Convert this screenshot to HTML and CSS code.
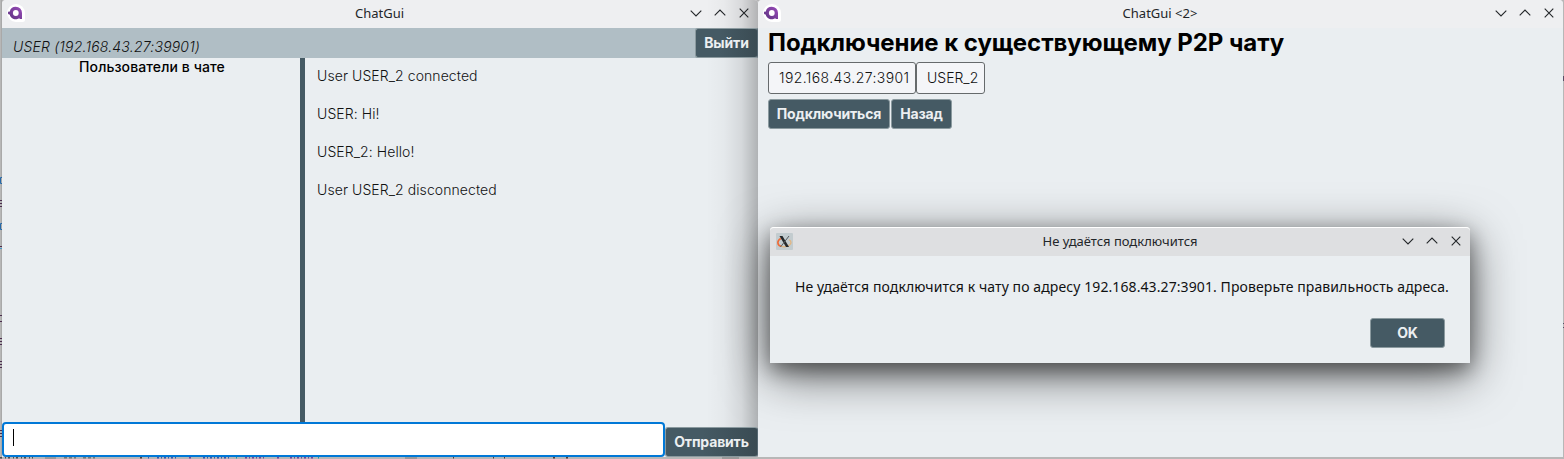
FILE: index.html
```html
<!DOCTYPE html>
<html lang="ru">
<head>
<meta charset="utf-8">
<title>ChatGui</title>
<link rel="stylesheet" href="styles.css">
</head>
<body>
<svg class="defs" width="0" height="0" aria-hidden="true">
  <defs>
    <linearGradient id="purple" x1="0" y1="1" x2="1" y2="0"><stop offset="0" stop-color="#5b327f"/><stop offset="1" stop-color="#9a4cba"/></linearGradient>
    <symbol id="logo" viewBox="0 0 18 18">
      <path d="M9 0a9 9 0 1 0 0 18h6.500a2.500 2.500 0 0 0 2.500-2.500V9a9 9 0 0 0-9-9z" fill="#fff"/>
      <path d="M8.800 2.700a6.200 6.200 0 0 0-6.100 5 1.400 1.400 0 1 0 0 2.700 6.200 6.200 0 0 0 9.800 3.700v.9H15V9a6.200 6.200 0 0 0-6.200-6.300z" fill="url(#purple)"/>
      <circle cx="8.800" cy="9" r="2.900" fill="#fff"/>
    </symbol>
    <symbol id="down" viewBox="0 0 12 12"><path d="M.7 3.600L6 8.900l5.300-5.300"/></symbol>
    <symbol id="up" viewBox="0 0 12 12"><path d="M.7 8.300L6 3l5.300 5.300"/></symbol>
    <symbol id="close" viewBox="0 0 12 12"><path d="M1.700 1.700l8.600 8.600M10.300 1.700L1.700 10.300"/></symbol>
  </defs>
</svg>
<main class="desktop">
  <svg class="backdrop" width="1564" height="459" viewBox="0 0 1564 459" aria-hidden="true">
    <path d="M1.500 0V459" stroke="#a9a9a9"/>
    <g fill="none" stroke-width="1">
      <path d="M2 177.500H.5v6H2M2 223.500H.5v6H2" stroke="#2468a8"/>
      <path d="M0 200.500h2M0 203.500h2M0 206.500h2M0 246.500h2M0 315.500h2M0 321.500h2M0 338.500h2M0 341.500h2M0 344.500h2M0 361.500h2M0 364.500h2M0 367.500h2M0 430.500h2M0 433.500h2M0 436.500h2" stroke="#4a2c4e"/>
      <path d="M0 248.500h2" stroke="#4898c8"/>
    </g>
    <g fill="none" stroke-width="1.500">
      <path d="M0 457.800h33" stroke="#514a4c" stroke-dasharray="2 3 1 2"/>
      <path d="M45 458h11M405 458h12M722 458h17" stroke="#999" stroke-width="2"/>
      <path d="M64 457.800h12m7 0h12" stroke="#777" stroke-dasharray="3 2"/>
      <path d="M140 457.800h2M453 457.800h1M493 457.800h1M504 457.800h1M553 457.800h2M566 457.800h2" stroke="#553b35"/>
      <path d="M148 457.800h1m8 0h19m27 0h28" stroke="#3a55ad" stroke-dasharray="2 2 1 2"/>
      <path d="M189 457.800h2m54 0h19m13 0h2m11 0h23" stroke="#74439a" stroke-dasharray="2 2 1 2"/>
      <path d="M236 457.800h1m81 0h1" stroke="#179aa8"/>
      <path d="M1563.500 76v5m0 242v1m0 3v1" stroke="#594d65" stroke-width="1"/>
    </g>
  </svg>
  <section class="window chat">
    <header class="titlebar">
      <svg class="logo"><use href="#logo"/></svg>
      <span class="caption">ChatGui</span>
      <div class="controls"><svg><use href="#down"/></svg><svg><use href="#up"/></svg><svg><use href="#close"/></svg></div>
    </header>
    <div class="userbar"><span class="user">USER (192.168.43.27:39901)</span><button class="btn btn--exit">Выйти</button></div>
    <div class="chat-body">
      <aside class="members">Пользователи в чате</aside>
      <div class="messages"><p>User USER_2 connected</p><p>USER: Hi!</p><p>USER_2: Hello!</p><p>User USER_2 disconnected</p></div>
    </div>
    <footer class="composer"><div class="message-input"><i class="caret"></i></div><button class="btn btn--send">Отправить</button></footer>
  </section>
  <section class="window connect">
    <header class="titlebar">
      <svg class="logo"><use href="#logo"/></svg>
      <span class="caption">ChatGui &lt;2&gt;</span>
      <div class="controls"><svg><use href="#down"/></svg><svg><use href="#up"/></svg><svg><use href="#close"/></svg></div>
    </header>
    <div class="form">
      <h1>Подключение к существующему P2P чату</h1>
      <div class="fields"><div class="field field--address">192.168.43.27:3901</div><div class="field field--name">USER_2</div></div>
      <div class="actions"><button class="btn btn--connect">Подключиться</button><button class="btn btn--back">Назад</button></div>
    </div>
  </section>
  <section class="dialog">
    <header class="titlebar titlebar--dialog">
      <svg class="xlogo" viewBox="0 0 17 17"><rect width="17" height="17" rx="1" fill="#c3cccf"/><path d="M4.800 5.500C.8 7.500.9 12.400 5 13.300" fill="none" stroke="#ef6a36" stroke-width="1.600"/><path d="M5 13.300c4 1.400 10-.5 10-4 0-1-.7-2-2-2.600" fill="none" stroke="#e3b57f" stroke-width="1.200"/><path d="M3.500 3h3l6.500 11h-3z" fill="#26292b"/><path d="M13 3L4.500 14" stroke="#555b5e" stroke-width="1"/></svg>
      <span class="caption">Не удаётся подключится</span>
      <div class="controls"><svg><use href="#down"/></svg><svg><use href="#up"/></svg><svg><use href="#close"/></svg></div>
    </header>
    <p class="dialog-text">Не удаётся подключится к чату по адресу 192.168.43.27:3901. Проверьте правильность адреса.</p>
    <div class="dialog-actions"><button class="btn btn--ok">OK</button></div>
  </section>
</main>
</body>
</html>
```
FILE: styles.css
```css
* { box-sizing: border-box; }
body { margin: 0; overflow: hidden; font-family: Inter, sans-serif; font-size: 14px; color: #111; }
p, h1 { margin: 0; }
.defs { position: absolute; }
.desktop { position: relative; display: flex; width: 1564px; height: 459px; padding-left: 2px; background: #b7b7b7; overflow: hidden; }
.backdrop { position: absolute; left: 0; top: 0; }

.window { position: relative; display: flex; flex-direction: column; height: 457px; background: #eaeef1; border-radius: 4px 4px 0 0; overflow: hidden; }
.chat { width: 756px; }
.chat::after { content: ""; position: absolute; inset: 0 0 0 auto; width: 52px; pointer-events: none; background: linear-gradient(to right, transparent, rgba(0,0,0,.025) 35%, rgba(0,0,0,.09) 68%, rgba(0,0,0,.25)); }
.connect { width: 805px; }

.titlebar { display: grid; grid-template-columns: 72px 1fr 72px; align-items: center; flex: none; height: 28px; padding: 0 6px 2px 5px; background: #eeeff1; }
.logo { width: 18px; height: 18px; }
.caption { text-align: center; font: 13px/18px "Noto Sans", sans-serif; color: #232629; }
.controls { display: flex; justify-content: flex-end; gap: 12px; padding-right: 2px; }
.controls svg { width: 12px; height: 12px; fill: none; stroke: #232629; stroke-width: 1.1; }

.btn { height: 30px; padding: 0; border: 1px solid #8b9a9f; border-radius: 3px; background: #455a64; color: #eceff1; font: 700 14px/26px Inter, sans-serif; letter-spacing: -.15px; }
.btn--exit { width: 63px; }
.btn--send { width: 93px; }
.btn--connect { width: 122px; }
.btn--back { width: 61px; }
.btn--ok { width: 75px; }
.chat .btn { position: relative; z-index: 1; border-right-color: #566872; background: linear-gradient(to right, #455a64 40%, #3a4b53); }

.userbar { display: flex; justify-content: space-between; flex: none; height: 30px; background: #b0bec5; }
.user { padding: 10px 0 0 11px; font-size: 14px; line-height: 18px; font-style: italic; font-weight: 300; letter-spacing: .2px; }
.chat-body { display: flex; flex: 1; min-height: 0; }
.members { width: 298px; padding-left: 2px; text-align: center; font-weight: 500; line-height: 18px; letter-spacing: .1px; color: #000; }
.messages { display: flex; flex-direction: column; gap: 20px; flex: 1; padding: 9px 0 0 12px; border-left: 5px solid #455a64; font-weight: 300; line-height: 18px; letter-spacing: .08px; }
.composer { display: flex; align-items: flex-end; flex: none; height: 35px; }
.message-input { width: 663px; height: 35px; padding: 5px 9px; border: 2px solid #0078d7; border-radius: 4px; background: #fff; }
.caret { display: block; width: 1px; height: 17px; background: #000; }

.form { padding: 0 10px; }
h1 { font-size: 24px; line-height: 30px; font-weight: 700; letter-spacing: -.05px; color: #000; white-space: nowrap; }
.fields { display: flex; padding-top: 4px; }
.field { height: 32px; padding-left: 10px; border: 1px solid #666a6c; border-radius: 3px; background: #f4f5f8; font-weight: 300; line-height: 30px; white-space: nowrap; }
.field--address { width: 148px; letter-spacing: .4px; }
.field--name { width: 69px; }
.actions { display: flex; gap: 1px; padding-top: 5px; }

.dialog { position: absolute; left: 770px; top: 227px; width: 700px; height: 136px; border-radius: 4px 4px 0 0; background: #eaeef1; box-shadow: 0 12px 48px rgba(0,0,0,.6), 0 7px 20px rgba(0,0,0,.4); }
.titlebar--dialog { height: 29px; padding: 0 6px 2px; background: #dedfe1; border-top: 1px solid #fff; border-radius: 4px 4px 0 0; }
.xlogo { width: 17px; height: 17px; }
.dialog-text { padding: 21px 0 0 25px; font: 14px/20px "Noto Sans", sans-serif; letter-spacing: .095px; white-space: nowrap; }
.dialog-actions { display: flex; justify-content: flex-end; padding: 21px 25px 0 0; }
```
